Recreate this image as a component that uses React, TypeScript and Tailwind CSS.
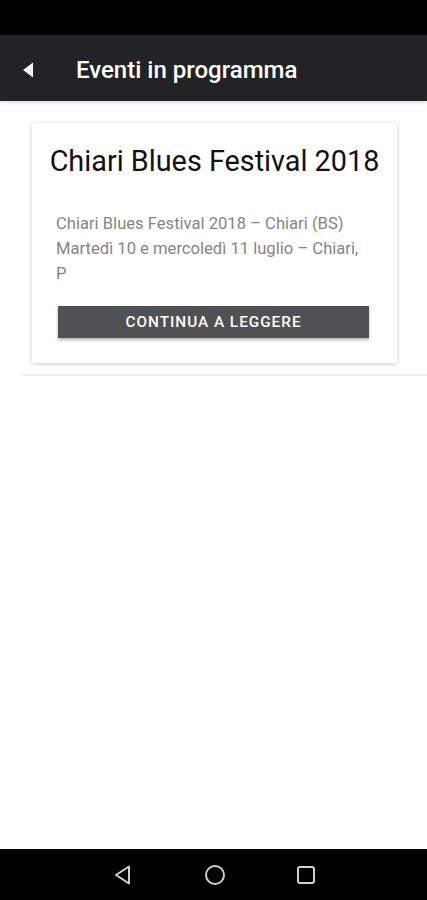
import React from "react";

export default function App() {
  return (
    <div className="w-[427px] h-[900px] flex flex-col bg-white overflow-hidden" style={{ fontFamily: "Roboto, 'Noto Sans', sans-serif" }}>
      <div className="h-[35px] bg-black shrink-0" />
      <div className="h-[66px] bg-[#222325] flex items-center shrink-0 shadow-[0_2px_3px_rgba(0,0,0,0.12)] relative z-10">
        <svg width="14" height="18" viewBox="0 0 14 18" className="ml-[21px] mt-[4px]">
          <path d="M12 1.5 L2 9 L12 16.5 Z" fill="#f5f5f5" />
        </svg>
        <span className="ml-[41px] mt-[4px] text-white text-[24px] font-medium">Eventi in programma</span>
      </div>
      <div className="flex-1 flex flex-col">
        <div className="pt-[22px] pl-[32px] pr-[30px]">
          <div className="bg-white rounded-[3px] shadow-[0_1px_4px_rgba(0,0,0,0.22)] h-[240px] flex flex-col">
            <div className="text-[28.8px] text-[#111111] text-center mt-[21px] leading-[34px]">Chiari Blues Festival 2018</div>
            <div className="mt-[33px] pl-[24px] pr-[14px] text-[16.6px] leading-[25px] text-[#858585] whitespace-nowrap">
              <div>Chiari Blues Festival 2018 – Chiari (BS)</div>
              <div>Martedì 10 e mercoledì 11 luglio – Chiari,</div>
              <div>P</div>
            </div>
            <div className="mt-[20px] ml-[26px] mr-[28px] h-[32px] bg-[#505152] flex items-center justify-center shadow-[0_2px_3px_rgba(0,0,0,0.3)]">
              <span className="text-white text-[15.3px] font-medium tracking-[1px]">CONTINUA A LEGGERE</span>
            </div>
          </div>
        </div>
        <div className="mt-[11px] ml-[20px] h-[2px] bg-[#f0f0f0]" />
      </div>
      <div className="h-[51px] bg-black shrink-0 flex items-center">
        <svg width="20" height="22" viewBox="0 0 20 22" className="ml-[113px]">
          <path d="M16 2.5 L3 11 L16 19.5 Z" fill="none" stroke="#d0d0d0" strokeWidth="2" strokeLinejoin="round" />
        </svg>
        <svg width="22" height="22" viewBox="0 0 22 22" className="ml-[71px]">
          <circle cx="11" cy="11" r="9" fill="none" stroke="#d0d0d0" strokeWidth="2" />
        </svg>
        <svg width="20" height="20" viewBox="0 0 20 20" className="ml-[70px]">
          <rect x="2" y="2" width="16" height="16" rx="2" fill="none" stroke="#d0d0d0" strokeWidth="2" />
        </svg>
      </div>
    </div>
  );
}
